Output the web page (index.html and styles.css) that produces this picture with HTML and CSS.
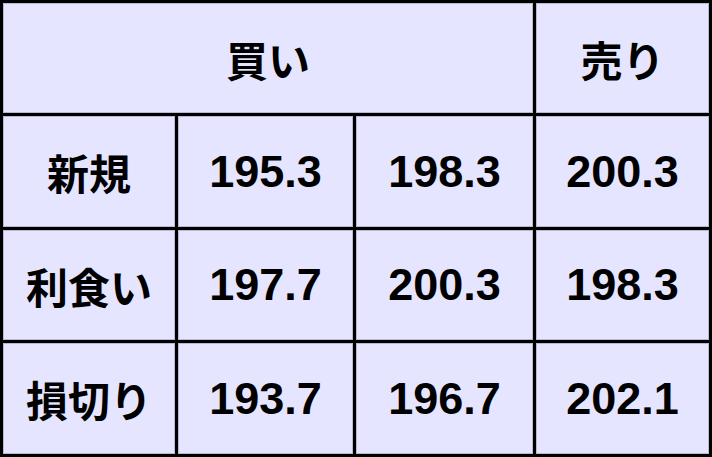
FILE: index.html
```html
<!DOCTYPE html>
<html lang="ja">
<head>
<meta charset="utf-8">
<link rel="stylesheet" href="styles.css">
</head>
<body>
<div class="grid">
  <div class="cell head span3">買い</div>
  <div class="cell head">売り</div>
  <div class="cell label">新規</div>
  <div class="cell num">195.3</div>
  <div class="cell num">198.3</div>
  <div class="cell num">200.3</div>
  <div class="cell label">利食い</div>
  <div class="cell num">197.7</div>
  <div class="cell num">200.3</div>
  <div class="cell num">198.3</div>
  <div class="cell label">損切り</div>
  <div class="cell num">193.7</div>
  <div class="cell num">196.7</div>
  <div class="cell num">202.1</div>
</div>
</body>
</html>
```
FILE: styles.css
```css
html, body {
  margin: 0;
  padding: 0;
  background: #ffffff;
}
.grid {
  width: 712px;
  height: 457px;
  box-sizing: border-box;
  padding: 3px;
  background: #000000;
  display: grid;
  grid-template-columns: 172px 175px 177px 173px;
  grid-template-rows: 110px 111px 110px 111px;
  gap: 3px;
}
.cell {
  background: #e5e5ff;
  display: flex;
  align-items: center;
  justify-content: center;
  color: #000;
  font-weight: 700;
  box-shadow: inset 0 0 0 1px #b8b8d0;
}
.span3 {
  grid-column: span 3;
}
.head, .label {
  font-family: "Noto Sans CJK JP", "Noto Sans", sans-serif;
  font-size: 42px;
}
.num {
  font-family: "Liberation Sans", Arial, sans-serif;
  font-size: 45px;
}
```
